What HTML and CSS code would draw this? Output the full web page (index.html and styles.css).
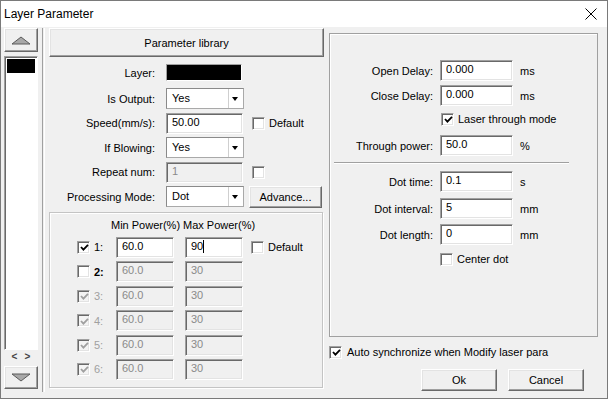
FILE: index.html
```html
<!DOCTYPE html>
<html lang="en">
<head>
    <meta charset="UTF-8">
    <title>Layer Parameter</title>
    <link rel="stylesheet" href="styles.css">
</head>
<body>
<div class="window">
    <div class="titlebar">
        <span class="title">Layer Parameter</span>
        <svg class="close" width="12" height="12" viewBox="0 0 12 12">
            <path d="M0.5 0.5 L11.5 11.5 M11.5 0.5 L0.5 11.5" stroke="#000" stroke-width="1" fill="none"/>
        </svg>
    </div>

    <div class="dialog">
        <!-- layer list on the left -->
        <div class="sidebar">
            <button class="btn arrow-btn up">
                <svg width="20" height="9" viewBox="0 0 20 9"><polygon points="1,8 10,1 19,8" fill="#a8a8a8" stroke="#5a5a5a" stroke-width="1"/></svg>
            </button>
            <div class="layer-list">
                <div class="layer-item selected"></div>
            </div>
            <div class="list-scroll"><span>&lt;</span><span>&gt;</span></div>
            <button class="btn arrow-btn down">
                <svg width="20" height="9" viewBox="0 0 20 9"><polygon points="1,1 10,8 19,1" fill="#a8a8a8" stroke="#5a5a5a" stroke-width="1"/></svg>
            </button>
        </div>

        <div class="divider"></div>

        <div class="left-col">
            <button class="btn wide-btn">Parameter library</button>

            <div class="form">
                <div class="row row-layer">
                    <span class="lbl">Layer:</span>
                    <span class="color-box"></span>
                </div>
                <div class="row">
                    <span class="lbl">Is Output:</span>
                    <div class="select"><span class="val">Yes</span><span class="drop"></span></div>
                </div>
                <div class="row">
                    <span class="lbl">Speed(mm/s):</span>
                    <input class="field" type="text" value="50.00">
                    <span class="cb after-field"></span>
                    <span class="cb-text">Default</span>
                </div>
                <div class="row">
                    <span class="lbl">If Blowing:</span>
                    <div class="select"><span class="val">Yes</span><span class="drop"></span></div>
                </div>
                <div class="row">
                    <span class="lbl">Repeat num:</span>
                    <input class="field" type="text" value="1" disabled>
                    <span class="cb after-field"></span>
                </div>
                <div class="row">
                    <span class="lbl">Processing Mode:</span>
                    <div class="select"><span class="val">Dot</span><span class="drop"></span></div>
                    <button class="btn advance-btn">Advance...</button>
                </div>
            </div>

            <div class="power-group">
                <div class="power-head">
                    <span class="head-min">Min Power(%)</span><span>Max Power(%)</span>
                </div>
                <div class="power-row">
                    <span class="cb checked"><svg width="9" height="9" viewBox="0 0 9 9"><path d="M1 4 L3.4 6.6 L8 1.8" stroke="#000" stroke-width="1.8" fill="none"/></svg></span>
                    <span class="num">1:</span>
                    <input class="field power" type="text" value="60.0">
                    <span class="field power caret">90</span>
                    <span class="cb after-field"></span>
                    <span class="cb-text">Default</span>
                </div>
                <div class="power-row">
                    <span class="cb"></span>
                    <span class="num bold">2:</span>
                    <input class="field power" type="text" value="60.0" disabled>
                    <input class="field power" type="text" value="30" disabled>
                </div>
                <div class="power-row">
                    <span class="cb checked off"><svg width="9" height="9" viewBox="0 0 9 9"><path d="M1 4 L3.4 6.6 L8 1.8" stroke="#a0a0a0" stroke-width="1.8" fill="none"/></svg></span>
                    <span class="num off">3:</span>
                    <input class="field power" type="text" value="60.0" disabled>
                    <input class="field power" type="text" value="30" disabled>
                </div>
                <div class="power-row">
                    <span class="cb checked off"><svg width="9" height="9" viewBox="0 0 9 9"><path d="M1 4 L3.4 6.6 L8 1.8" stroke="#a0a0a0" stroke-width="1.8" fill="none"/></svg></span>
                    <span class="num off">4:</span>
                    <input class="field power" type="text" value="60.0" disabled>
                    <input class="field power" type="text" value="30" disabled>
                </div>
                <div class="power-row">
                    <span class="cb checked off"><svg width="9" height="9" viewBox="0 0 9 9"><path d="M1 4 L3.4 6.6 L8 1.8" stroke="#a0a0a0" stroke-width="1.8" fill="none"/></svg></span>
                    <span class="num off">5:</span>
                    <input class="field power" type="text" value="60.0" disabled>
                    <input class="field power" type="text" value="30" disabled>
                </div>
                <div class="power-row">
                    <span class="cb checked off"><svg width="9" height="9" viewBox="0 0 9 9"><path d="M1 4 L3.4 6.6 L8 1.8" stroke="#a0a0a0" stroke-width="1.8" fill="none"/></svg></span>
                    <span class="num off">6:</span>
                    <input class="field power" type="text" value="60.0" disabled>
                    <input class="field power" type="text" value="30" disabled>
                </div>
            </div>
        </div>

        <div class="right-col">
            <div class="laser-panel">
                <div class="prow p-open">
                    <span class="plbl">Open Delay:</span>
                    <input class="field pfield" type="text" value="0.000">
                    <span class="unit">ms</span>
                </div>
                <div class="prow p-close">
                    <span class="plbl">Close Delay:</span>
                    <input class="field pfield" type="text" value="0.000">
                    <span class="unit">ms</span>
                </div>
                <div class="prow p-check p-laser">
                    <span class="cb checked"><svg width="9" height="9" viewBox="0 0 9 9"><path d="M1 4 L3.4 6.6 L8 1.8" stroke="#000" stroke-width="1.8" fill="none"/></svg></span>
                    <span class="cb-text">Laser through mode</span>
                </div>
                <div class="prow p-through">
                    <span class="plbl">Through power:</span>
                    <input class="field pfield" type="text" value="50.0">
                    <span class="unit">%</span>
                </div>
                <div class="separator"></div>
                <div class="prow p-dot">
                    <span class="plbl">Dot time:</span>
                    <input class="field pfield" type="text" value="0.1">
                    <span class="unit">s</span>
                </div>
                <div class="prow p-interval">
                    <span class="plbl">Dot interval:</span>
                    <input class="field pfield" type="text" value="5">
                    <span class="unit">mm</span>
                </div>
                <div class="prow p-length">
                    <span class="plbl">Dot length:</span>
                    <input class="field pfield" type="text" value="0">
                    <span class="unit">mm</span>
                </div>
                <div class="prow p-check p-center">
                    <span class="cb"></span>
                    <span class="cb-text">Center dot</span>
                </div>
            </div>

            <div class="auto-sync">
                <span class="cb checked"><svg width="9" height="9" viewBox="0 0 9 9"><path d="M1 4 L3.4 6.6 L8 1.8" stroke="#000" stroke-width="1.8" fill="none"/></svg></span>
                <span class="cb-text">Auto synchronize when Modify laser para</span>
            </div>

            <div class="actions">
                <button class="btn action-btn">Ok</button>
                <button class="btn action-btn">Cancel</button>
            </div>
        </div>
    </div>
</div>
</body>
</html>
```

FILE: styles.css
```css
body {
    margin: 0;
    font-family: "Liberation Sans", Arial, sans-serif;
    font-size: 11px;
    color: #000;
    background: #fff;
}

.window {
    width: 608px;
    height: 399px;
    box-sizing: border-box;
    border: 1px solid #7a7a7a;
    background: #f0f0f0;
    display: flex;
    flex-direction: column;
}

.titlebar {
    height: 26px;
    flex-shrink: 0;
    background: #fff;
    display: flex;
    align-items: center;
    justify-content: space-between;
    padding: 0 10px 0 3px;
}

.title {
    font-size: 12px;
}

.dialog {
    display: flex;
    flex: 1;
}

/* classic raised button */
.btn {
    font-family: inherit;
    font-size: 11px;
    color: #000;
    background: #f0f0f0;
    border: 1px solid;
    border-color: #fff #696969 #696969 #fff;
    box-shadow: inset -1px -1px 0 #a0a0a0, inset 1px 1px 0 #e3e3e3;
    padding: 0;
    box-sizing: border-box;
    display: flex;
    align-items: center;
    justify-content: center;
}

/* classic sunken field */
.field {
    box-sizing: border-box;
    height: 21px;
    border: 1px solid;
    border-color: #a0a0a0 #fff #fff #a0a0a0;
    box-shadow: inset 1px 1px 0 #696969, inset -1px -1px 0 #e3e3e3;
    background: #fff;
    font-family: inherit;
    font-size: 11px;
    color: #000;
    padding: 0 0 3px 5px;
    margin: 0;
    outline: none;
}

.field:disabled {
    background: #f0f0f0;
    color: #8a8a8a;
}

.cb {
    width: 13px;
    height: 13px;
    box-sizing: border-box;
    flex-shrink: 0;
    border: 1px solid;
    border-color: #a0a0a0 #fff #fff #a0a0a0;
    box-shadow: inset 1px 1px 0 #696969, inset -1px -1px 0 #e3e3e3;
    background: #fff;
    display: flex;
    align-items: center;
    justify-content: center;
}

.cb svg {
    display: block;
    margin: 1px 0 0 1px;
}

.cb.off {
    background: #f4f4f4;
}

.cb-text {
    margin-left: 4px;
}

/* sidebar */
.sidebar {
    width: 34px;
    padding: 0 3px;
    display: flex;
    flex-direction: column;
}

.arrow-btn {
    width: 34px;
    margin-top: 1px;
    height: 24px;
}

.arrow-btn.down {
    margin-top: 4px;
    height: 23px;
}

.layer-list {
    margin-top: 4px;
    height: 294px;
    box-sizing: border-box;
    border: 1px solid;
    border-color: #a0a0a0 #fff #fff #a0a0a0;
    box-shadow: inset 1px 1px 0 #696969;
    background: #fff;
    padding: 2px 2px 0 2px;
}

.layer-item.selected {
    height: 14px;
    background: #000;
}

.list-scroll {
    height: 12px;
    display: flex;
    justify-content: space-around;
    align-items: center;
    font-size: 10px;
    font-weight: bold;
    color: #444;
    padding: 0 4px;
}

.divider {
    width: 1px;
    margin: 1px 0 0 1px;
    height: 364px;
    border-left: 1px solid #a0a0a0;
    border-right: 1px solid #fff;
}

/* left column */
.left-col {
    width: 274px;
    margin-left: 4px;
    display: flex;
    flex-direction: column;
}

.wide-btn {
    margin-top: 1px;
    height: 29px;
    width: 275px;
    font-size: 11px;
}

.form {
    margin-top: 5px;
    display: flex;
    flex-direction: column;
    gap: 3.5px;
}

.row {
    height: 21px;
    display: flex;
    align-items: center;
}

.row-layer {
    margin-bottom: 1.5px;
}

.lbl {
    width: 106px;
    margin-right: 11px;
    text-align: right;
    flex-shrink: 0;
}

.color-box {
    width: 76px;
    height: 17px;
    box-sizing: border-box;
    background: #000;
    border: 1px solid;
    border-color: #a0a0a0 #fff #fff #a0a0a0;
}

.row .field {
    width: 77px;
}

.select {
    width: 78px;
    height: 21px;
    box-sizing: border-box;
    border: 1px solid #a9a9a9;
    border-top-color: #8a8a8a;
    border-left-color: #8a8a8a;
    background: #fff;
    display: flex;
}

.select .val {
    flex: 1;
    padding: 3px 0 0 5px;
}

.select .drop {
    width: 14px;
    border-left: 1px solid #cfcfcf;
    position: relative;
}

.select .drop::after {
    content: "";
    position: absolute;
    left: 3px;
    top: 8px;
    border-left: 3.5px solid transparent;
    border-right: 3.5px solid transparent;
    border-top: 4px solid #000;
}

.after-field {
    margin-left: 9px;
}

.advance-btn {
    width: 73px;
    height: 22px;
    margin-left: 5px;
}

/* power table */
.power-group {
    margin-top: 5px;
    height: 176px;
    box-sizing: border-box;
    border: 1px solid #c4c4c4;
    box-shadow: inset 1px 1px 0 #fff, 1px 1px 0 #fff;
    display: flex;
    flex-direction: column;
    gap: 3.4px;
}

.power-head {
    padding: 5px 0 0 61px;
    line-height: 14px;
    margin-bottom: 1.6px;
}

.head-min {
    display: inline-block;
    width: 72px;
}

.power-row {
    height: 21px;
    display: flex;
    align-items: center;
    padding-left: 27px;
}

.num {
    width: 22px;
    margin-left: 4px;
}

.num.bold {
    font-weight: bold;
}

.num.off {
    color: #a0a0a0;
}

.field.power {
    width: 58px;
    margin-right: 11px;
}

.field.power + .after-field {
    margin-left: -3px;
}

.caret {
    display: flex;
    align-items: center;
    padding-bottom: 2px;
}

.caret::after {
    content: "";
    width: 1px;
    height: 13px;
    background: #000;
}

/* right column */
.right-col {
    width: 269px;
    margin-left: 6px;
    display: flex;
    flex-direction: column;
}

.laser-panel {
    margin-top: 6px;
    height: 304px;
    box-sizing: border-box;
    border: 1px solid #a0a0a0;
    box-shadow: inset 1px 1px 0 #fff;
    padding-top: 26px;
    display: flex;
    flex-direction: column;
}

.prow {
    height: 21px;
    display: flex;
    align-items: center;
    flex-shrink: 0;
}

.plbl {
    width: 103px;
    margin-right: 7px;
    text-align: right;
}

.pfield {
    width: 73px;
}

.unit {
    margin-left: 7px;
}

.p-check {
    padding-left: 111px;
    height: 20px;
}

.p-close { margin-top: 4px; }
.p-laser { margin-top: 3px; }
.p-through { margin-top: 6px; }
.p-dot { margin-top: 7px; }
.p-interval { margin-top: 6px; }
.p-length { margin-top: 5px; }
.p-center { margin-top: 4px; padding-left: 110px; }

.separator {
    margin: 6px 0 0 4px;
    width: 235px;
    height: 0;
    border-top: 1px solid #a0a0a0;
    border-bottom: 1px solid #fff;
}

.auto-sync {
    margin-top: 5px;
    height: 20px;
    display: flex;
    align-items: center;
}

.auto-sync .cb-text {
    margin-left: 5px;
}

.actions {
    margin-top: 7px;
    display: flex;
    justify-content: flex-end;
    gap: 11px;
    padding-right: 14px;
}

.action-btn {
    width: 76px;
    height: 22px;
}
```
